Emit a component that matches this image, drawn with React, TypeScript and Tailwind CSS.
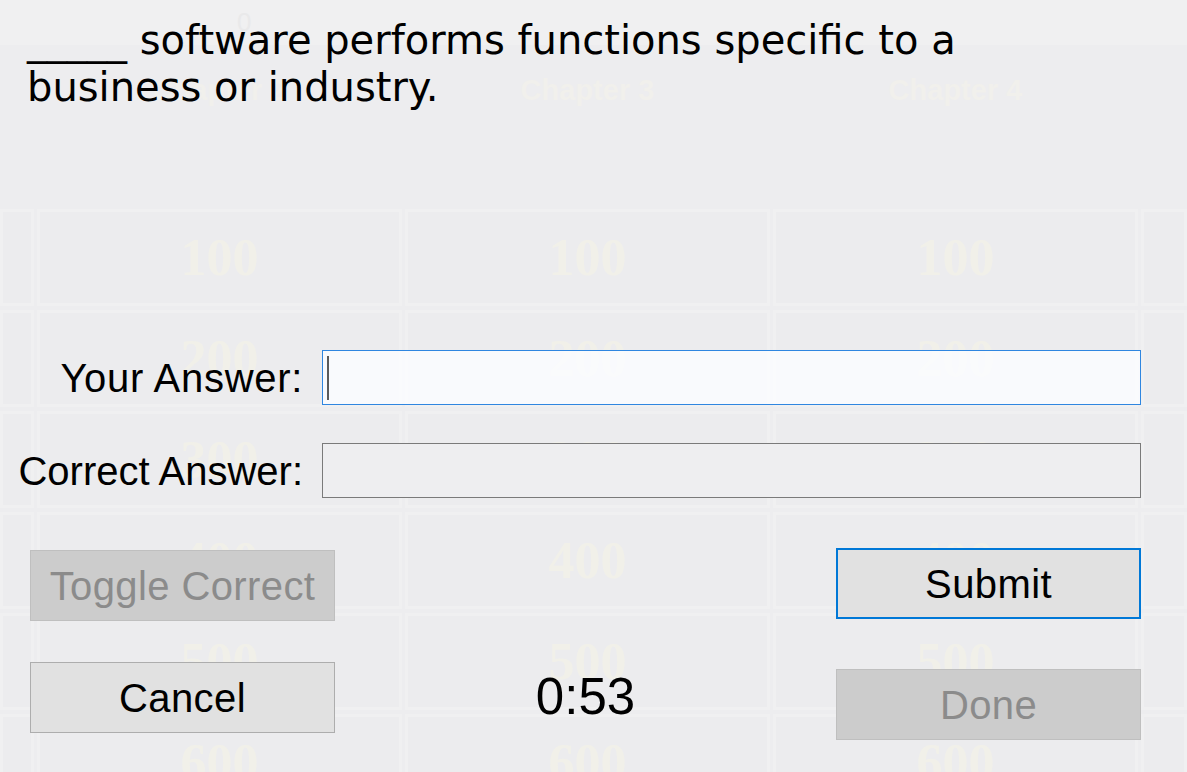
import React from "react";

const points = [100, 200, 300, 400, 500, 600];
const headers = ["", "Chapter 2", "Chapter 3", "Chapter 4", ""];

function Board() {
  return (
    <div className="flex flex-col">
      {/* score strip */}
      <div className="h-[45px] bg-[#f0f0f1] flex items-center">
        <span className="ml-[237px] text-[26px] text-[#e9e9ea] font-['Liberation_Sans',sans-serif]">0</span>
      </div>

      {/* category headers */}
      <div className="h-[164px] grid grid-cols-[34px_365px_365px_365px_1fr] gap-x-[3px] pt-[24px]">
        {headers.map((h, i) => (
          <div
            key={i}
            className="text-center text-[29px] font-bold text-[#f1f0ec] font-['Liberation_Sans',sans-serif]"
          >
            {h}
          </div>
        ))}
      </div>

      {/* point cells */}
      <div className="grid grid-cols-[34px_365px_365px_365px_1fr] auto-rows-[97px] gap-x-[3px] gap-y-[4px]">
        {points.map((p) =>
          [0, 1, 2, 3, 4].map((c) => (
            <div
              key={p + "-" + c}
              className="flex items-center justify-center border-[3px] border-[#f0f0f1] bg-[#ececee]"
            >
              {c > 0 && c < 4 && (
                <span className="text-[52px] font-bold text-[#f1f0e9] font-['Liberation_Serif',serif]">
                  {p}
                </span>
              )}
            </div>
          ))
        )}
      </div>
    </div>
  );
}

function WinButton({
  label,
  disabled,
  focused,
  className = "",
}: {
  label: string;
  disabled?: boolean;
  focused?: boolean;
  className?: string;
}) {
  const look = disabled
    ? "bg-[#cccccc] border border-[#bfbfbf] text-[#8b8b8b]"
    : focused
    ? "bg-[#e1e1e1] border-2 border-[#0078d7] text-black"
    : "bg-[#e1e1e1] border border-[#adadad] text-black";
  return (
    <button
      disabled={disabled}
      className={`w-[305px] h-[71px] flex items-center justify-center text-[40px] tracking-[0.4px] ${look} ${className}`}
    >
      {label}
    </button>
  );
}

export default function App() {
  return (
    <div className="relative w-[1187px] h-[772px] overflow-hidden bg-[#ededef]">
      <Board />

      {/* answer dialog */}
      <div className="absolute inset-0 flex flex-col pl-[10px] pr-[46px] font-['Liberation_Sans',Arial,sans-serif]">
        <p className="pl-[17px] pt-[17px] w-[970px] text-[40px] leading-[47px] text-black font-['DejaVu_Sans',sans-serif]">
          _____ software performs functions specific to a business or industry.
        </p>

        <div className="mt-[239px] grid grid-cols-[293px_1fr] gap-x-[19px] gap-y-[38px] items-center">
          <label className="flex justify-end whitespace-nowrap text-[40px] leading-none tracking-[0.7px] text-black">
            Your Answer:
          </label>
          <div className="h-[55px] border border-[#2f86e0] bg-[#fafbfd]/95 flex items-center pl-[4px]">
            <span className="w-[2px] h-[44px] bg-[#5a5a5a]" />
          </div>

          <label className="flex justify-end whitespace-nowrap text-[40px] leading-none text-black">
            Correct Answer:
          </label>
          <div className="h-[55px] border border-[#7a7a7a] bg-[#eeeef0]" />
        </div>

        <div className="mt-[50px] pl-[20px] flex justify-between items-start">
          <WinButton label="Toggle Correct" disabled className="mt-[2px]" />
          <WinButton label="Submit" focused />
        </div>

        <div className="mt-[41px] pl-[20px] flex items-start">
          <WinButton label="Cancel" />
          <div className="flex-1 h-[71px] flex items-center justify-center text-[51px] text-black">
            0:53
          </div>
          <WinButton label="Done" disabled className="mt-[7px]" />
        </div>
      </div>
    </div>
  );
}
